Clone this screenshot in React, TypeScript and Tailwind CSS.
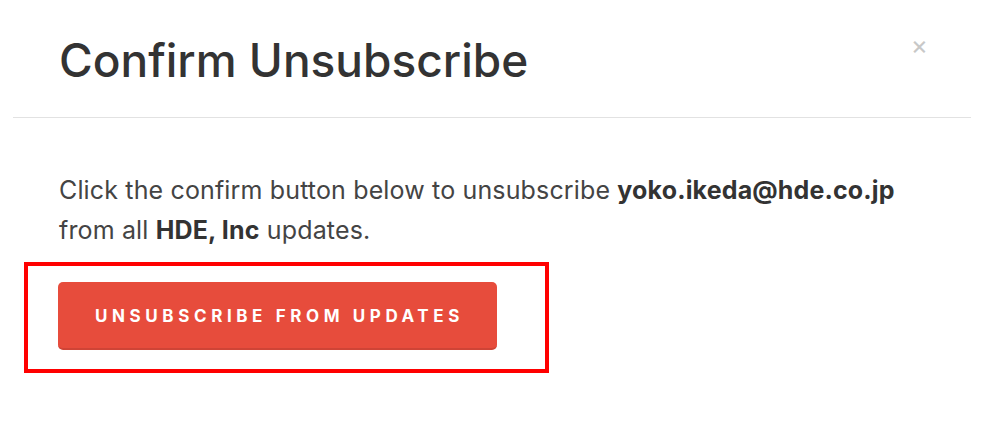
export default function App() {
  return (
    <div className="w-full h-[425px] bg-white pl-[13px] font-['Inter','Liberation_Sans',sans-serif] overflow-hidden">
      <div className="w-[958px]">
        {/* Header */}
        <div className="relative h-[118px] border-b border-[#e2e2e2] pl-[46px] pt-[30px]">
          <h1 className="text-[46px] leading-[60px] font-medium text-[#333]">
            Confirm Unsubscribe
          </h1>
          <button className="absolute right-[43px] top-[32px] text-[#c8c8c8] text-[26px] leading-none">
            ×
          </button>
        </div>

        {/* Body */}
        <div className="pt-[52px]">
          <p className="pl-[46px] text-[25px] leading-[40px] text-[#444] tracking-[0.15px]">
            Click the confirm button below to unsubscribe{" "}
            <strong className="font-bold text-[#333]">yoko.ikeda@hde.co.jp</strong>
            <br />
            from all <strong className="font-bold text-[#333]">HDE, Inc</strong> updates.
          </p>

          <div className="mt-[12px] ml-[11px] w-[525px] h-[111px] border-4 border-[#ff0000] pl-[30px] pt-[16px]">
            <button className="w-[439px] h-[68px] rounded-[5px] bg-[#e74c3c] border-b-2 border-[#cf4436] text-white text-[17px] font-bold tracking-[4.6px] pl-[4px] pt-[3px]">
              UNSUBSCRIBE FROM UPDATES
            </button>
          </div>
        </div>
      </div>
    </div>
  );
}
